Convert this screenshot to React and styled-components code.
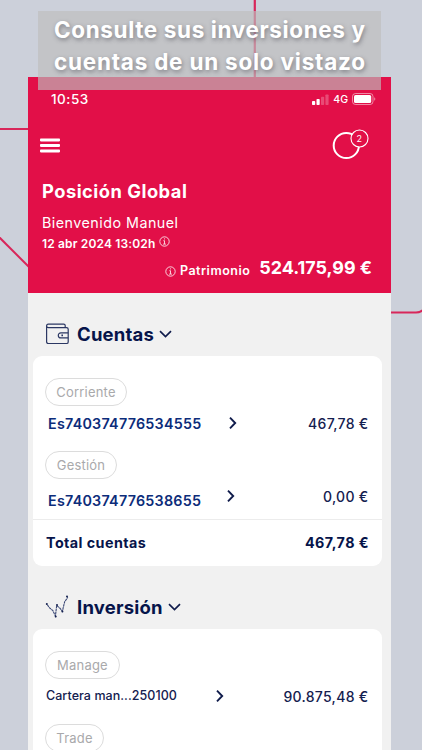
import styled, { createGlobalStyle } from 'styled-components';

const GlobalStyle = createGlobalStyle`
  * {
    box-sizing: border-box;
  }

  body {
    margin: 0;
    background: #ccd0da;
    font-family: Inter, 'Open Sans', sans-serif;
    overflow: hidden;
  }
`;

const Screen = styled.div`
  position: relative;
  width: 422px;
  height: 750px;
  overflow: hidden;
  background: #ccd0da;
  padding: 77px 31px 0 28px;
`;

const Backdrop = styled.svg`
  position: absolute;
  inset: 0;
  fill: none;
  stroke: #d8265a;
`;

const Banner = styled.h1`
  position: absolute;
  top: 11px;
  left: 38px;
  width: 343px;
  height: 79px;
  margin: 0;
  padding: 3px 0 0 16px;
  background: rgba(190, 190, 190, 0.66);
  color: #fff;
  font-size: 22.5px;
  font-weight: 700;
  line-height: 31.5px;
  text-shadow: 1px 2px 4px rgba(60, 60, 70, 0.5);
  white-space: nowrap;
`;

const BannerLine = styled.span`
  display: block;
  letter-spacing: ${props => props.$spacing}px;
`;

const Phone = styled.div`
  position: relative;
  height: 673px;
  background: #f1f1f1;
  overflow: hidden;
`;

const Header = styled.header`
  height: 216px;
  padding: 13px 19px 0 14px;
  background: #e20f48;
  color: #fff;
`;

const StatusBar = styled.div`
  display: flex;
  align-items: center;
  height: 18px;
  padding: 0 0 0 9px;
  margin-right: -4px;
`;

const Clock = styled.span`
  flex: 1;
  font-size: 13.5px;
  font-weight: 500;
  letter-spacing: 0.5px;
`;

const Network = styled.span`
  margin: 0 4px 0 4px;
  font-size: 10.5px;
  font-weight: 500;
`;

const NavBar = styled.div`
  display: flex;
  align-items: center;
  justify-content: space-between;
  height: 73px;
  margin: 0 3px 0 -2px;
`;

const Text = styled.div`
  display: flex;
  align-items: center;
  height: ${props => props.$height}px;
  font-size: ${props => props.$size}px;
  font-weight: ${props => props.$weight || 400};
  letter-spacing: ${props => props.$spacing || 0}px;
  white-space: nowrap;
`;

const Title = styled(Text)`
  margin-bottom: 13px;
`;

const InfoIcon = styled.svg`
  width: 11px;
  height: 11px;
  fill: none;
  stroke: currentColor;
  stroke-width: 0.8;
`;

const Timestamp = styled(Text)`
  ${InfoIcon} {
    margin: 0 0 3px 4px;
  }
`;

const NetWorth = styled.div`
  display: flex;
  align-items: center;
  justify-content: flex-end;
  height: 26px;

  ${InfoIcon} {
    margin: 9px 4px 0 0;
  }
`;

const NetWorthLabel = styled(Text)`
  margin: 6px 9px 0 0;
`;

const SectionHeading = styled.h2`
  display: flex;
  align-items: center;
  height: 63px;
  margin: 0;
  padding: 19px 0 0 17px;
  color: #06144a;
  font-size: 18.5px;
  font-weight: 700;
  letter-spacing: ${props => props.$spacing}px;

  span {
    margin: 0 5px 1px 7px;
  }
`;

const Card = styled.section`
  width: 349px;
  height: ${props => props.$height}px;
  margin-left: 5px;
  padding-top: 22px;
  border-radius: 9px;
  background: #fff;
  color: #14204f;
`;

const Account = styled.div`
  height: 62px;
  margin: 0 14px 11px 12px;

  &:nth-of-type(2) {
    margin-bottom: 6px;
  }
`;

const Pill = styled.div`
  display: flex;
  align-items: center;
  justify-content: center;
  width: ${props => props.$width}px;
  height: 28px;
  border: 1px solid #dcdcdc;
  border-radius: 14px;
  color: #a9a9ab;
  font-size: 13px;
  letter-spacing: 0.2px;
`;

const AccountRow = styled.div`
  display: grid;
  grid-template-columns: ${props => props.$nameWidth}px 10px 1fr;
  align-items: center;
  height: 34px;
`;

const Iban = styled.span`
  padding: ${props => props.$drop || 0}px 0 0 3px;
  color: #0c2c7a;
  font-size: 14.3px;
  font-weight: 600;
  letter-spacing: 0.25px;
`;

const Portfolio = styled.span`
  padding: 0 0 1px 1px;
  font-size: 12.5px;
  font-weight: 500;
  letter-spacing: 0.05px;
`;

const Amount = styled.span`
  text-align: right;
  font-size: 14px;
  letter-spacing: 0.3px;
  margin-right: -0.5px;
  font-weight: 450;
`;

const Total = styled.div`
  display: flex;
  align-items: center;
  justify-content: space-between;
  height: 47px;
  padding: 0 13px 1px 13px;
  border-top: 1px solid #ececec;
  color: #06144a;
  font-size: 14.3px;
  font-weight: 700;
  letter-spacing: 0.45px;
`;

const Info = () => (
  <InfoIcon viewBox="0 0 11 11">
    <circle cx="5.5" cy="5.5" r="4.7" />
    <path d="M5.5 2.4v1M4.4 4.7h1.1v3.2M4.1 8.1h2.8" />
  </InfoIcon>
);

const ChevronRight = () => (
  <svg width="10" height="14" viewBox="0 0 10 14" fill="none" stroke="#101c4c" strokeWidth="1.9">
    <path d="M2 1.6l5.2 5.4L2 12.4" />
  </svg>
);

const ChevronDown = () => (
  <svg width="13" height="9" viewBox="0 0 13 9" fill="none" stroke="#101c4c" strokeWidth="1.7">
    <path d="M1 1.2l5.5 5.3L12 1.2" />
  </svg>
);

const Signal = () => (
  <svg width="17" height="11" viewBox="0 0 17 11" fill="#fff">
    <rect x="0" y="7" width="3.2" height="4" rx="0.8" />
    <rect x="4.5" y="5" width="3.2" height="6" rx="0.8" />
    <rect x="9" y="2.7" width="3.2" height="8.3" rx="0.8" opacity="0.25" />
    <rect x="13.4" y="0.4" width="3.2" height="10.6" rx="0.8" opacity="0.25" />
  </svg>
);

const Battery = () => (
  <svg width="24" height="12" viewBox="0 0 24 12">
    <rect x="0.5" y="0.5" width="20.5" height="11" rx="3" fill="none" stroke="#fff" opacity="0.5" />
    <rect x="2" y="2" width="17.2" height="8" rx="1.6" fill="#fff" />
    <path d="M22.2 4.2v3.6c1.5-.6 1.5-3 0-3.6z" fill="#fff" opacity="0.5" />
  </svg>
);

const Menu = () => (
  <svg width="20" height="16" viewBox="0 0 20 16" fill="#fff">
    <rect width="20" height="2.8" rx="0.8" y="1.6" />
    <rect width="20" height="2.8" rx="0.8" y="7.1" />
    <rect width="20" height="2.8" rx="0.8" y="12.6" />
  </svg>
);

const Notifications = () => (
  <svg width="37" height="32" viewBox="0 0 37 32" stroke="#fff">
    <circle cx="14.3" cy="16.5" r="12.6" fill="none" strokeWidth="2" />
    <circle cx="27.5" cy="9.5" r="8.5" fill="#e20f48" strokeWidth="1.1" />
    <text x="27.3" y="12.8" textAnchor="middle" fontSize="9" fill="#fff" stroke="none">2</text>
  </svg>
);

const Wallet = () => (
  <svg width="25" height="22" viewBox="0 0 25 22" fill="none" stroke="#2b3763" strokeWidth="1.2">
    <path d="M20.2 4.6V2.6c0-.9-.6-1.4-1.5-1.4H3.3c-1.1 0-1.7.8-1.7 1.7s.8 1.7 1.9 1.7h18c1.2 0 1.7.6 1.7 1.7v12.600c0 1-.6 1.6-1.6 1.6H3.3c-1.1 0-1.7-.7-1.7-1.7V2.9" />
    <path d="M23.2 9.9h-7.3c-1.6 0-2.6 1-2.6 2.5s1 2.5 2.6 2.5h7.3" />
    <path d="M17.2 11.5v1.8" strokeWidth="1.6" />
  </svg>
);

const Trend = () => (
  <svg width="25" height="24" viewBox="0 0 25 24" fill="none" stroke="#3a4775" strokeWidth="1.1">
    <path d="M2.3 9.7l2.3 3.2 3.3 2.8 2.5 5.2 1.3-10.4 3 2.5 2.7 3.2 2.3-9.5 2.5-3.5.5-1" strokeDasharray="2.6 0.5" />
    <g fill="#14204f" stroke="none">
      <circle cx="1.8" cy="8.9" r="1" />
      <circle cx="10.7" cy="21.5" r="1" />
      <circle cx="12" cy="10" r="1" />
      <circle cx="17.4" cy="16.5" r="1" />
      <circle cx="22" cy="1.4" r="1" />
    </g>
  </svg>
);

const App = () => {
  return (
    <>
      <GlobalStyle />
      <Screen>
        <Backdrop width="422" height="750" viewBox="0 0 422 750">
          <path d="M254.800 0v80M0 129h30" strokeWidth="2.2" />
          <path d="M-2 236l32 32" strokeWidth="2" />
          <path d="M389 312.500h27c3 0 4.500-.5 7-2.500" strokeWidth="2.2" />
        </Backdrop>
        <Phone>
          <Header>
            <StatusBar>
              <Clock>10:53</Clock>
              <Signal />
              <Network>4G</Network>
              <Battery />
            </StatusBar>
            <NavBar>
              <Menu />
              <Notifications />
            </NavBar>
            <Title $height={19} $size={18.3} $weight={700} $spacing={0.5}>Posición Global</Title>
            <Text $height={19} $size={14.3} $spacing={0.48}>Bienvenido Manuel</Text>
            <Timestamp $height={22} $size={12} $weight={600} $spacing={0.15}>
              12 abr 2024 13:02h <Info />
            </Timestamp>
            <NetWorth>
              <Info />
              <NetWorthLabel $size={12.5} $weight={600} $spacing={0.5}>Patrimonio</NetWorthLabel>
              <Text $size={17.9} $weight={700}>524.175,99 €</Text>
            </NetWorth>
          </Header>

          <SectionHeading $spacing={0.2}>
            <Wallet />
            <span>Cuentas</span>
            <ChevronDown />
          </SectionHeading>
          <Card $height={210}>
            <Account>
              <Pill $width={82}>Corriente</Pill>
              <AccountRow $nameWidth={183}>
                <Iban>Es740374776534555</Iban>
                <ChevronRight />
                <Amount>467,78 €</Amount>
              </AccountRow>
            </Account>
            <Account>
              <Pill $width={72}>Gestión</Pill>
              <AccountRow $nameWidth={181}>
                <Iban $drop={8}>Es740374776538655</Iban>
                <ChevronRight />
                <Amount>0,00 €</Amount>
              </AccountRow>
            </Account>
            <Total>
              <span>Total cuentas</span>
              <span>467,78 €</span>
            </Total>
          </Card>

          <SectionHeading $spacing={0.2}>
            <Trend />
            <span>Inversión</span>
            <ChevronDown />
          </SectionHeading>
          <Card $height={210}>
            <Account>
              <Pill $width={75}>Manage</Pill>
              <AccountRow $nameWidth={170}>
                <Portfolio>Cartera man...250100</Portfolio>
                <ChevronRight />
                <Amount>90.875,48 €</Amount>
              </AccountRow>
            </Account>
            <Account>
              <Pill $width={59}>Trade</Pill>
            </Account>
          </Card>
        </Phone>
        <Banner>
          <BannerLine $spacing={0.62}>Consulte sus inversiones y</BannerLine>
          <BannerLine $spacing={0.77}>cuentas de un solo vistazo</BannerLine>
        </Banner>
      </Screen>
    </>
  );
};

export default App;
